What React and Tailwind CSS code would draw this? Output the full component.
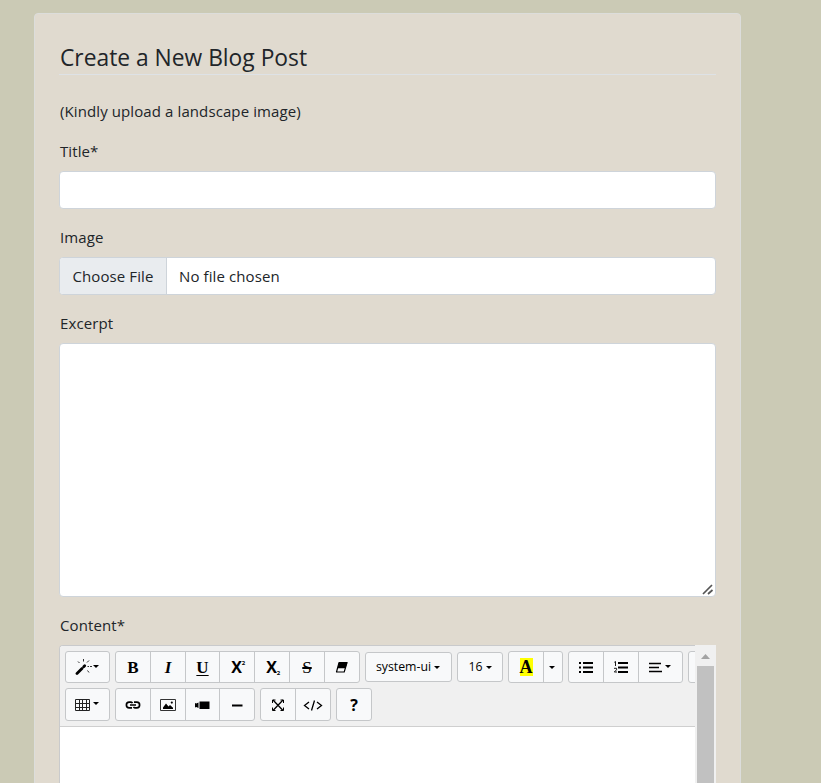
const F = 'font-["Open_Sans","Noto_Sans",sans-serif]';

const Caret = ({ className = '' }) => (
  <svg width="6" height="3" viewBox="0 0 6 3" className={'mb-0.5 shrink-0 ' + className}>
    <path d="M0 0h6L3 3z" fill="#000" />
  </svg>
);

const Ico = ({ w = 16, h = 16, children, className = '' }) => (
  <svg width={w} height={h} viewBox={`0 0 ${w} ${h}`} fill="none" stroke="#000" className={'shrink-0 ' + className}>
    {children}
  </svg>
);

const Wand = () => (
  <Ico w={17}>
    <path d="M2 14.500L7 9.500" strokeWidth="2.800" strokeLinecap="round" />
    <path d="M8.700 7.800L9.700 6.800" strokeWidth="2.800" strokeLinecap="round" />
    <path d="M8.500 0v2.500M14 1.500l-2 2M12.500 7.500h1.500M15 7.500h2" strokeWidth="1" stroke="#333" />
    <path d="M3 2.500l1.500 1.500M12.500 11.500l1.500 2" strokeWidth="1" stroke="#333" />
  </Ico>
);
const TableIcon = () => (
  <Ico>
    <path d="M.5 2.500h14v11H.5zM.5 6.500h14M.5 10.500h14M4.500 2.500v11M7.500 2.500v11M11.500 2.500v11" strokeWidth="1" stroke="#222" />
  </Ico>
);
const LinkIcon = () => (
  <Ico>
    <path d="M7 10.800H4.200a2.800 2.800 0 010-5.600H6a2 2 0 011.500 1M9 5.200h2.800a2.800 2.800 0 010 5.600H10a2 2 0 01-1.500-1M5 8h6" strokeWidth="1.700" />
  </Ico>
);
const Picture = () => (
  <Ico>
    <path d="M.5 2.500h15v11H.5z" strokeWidth="1" stroke="#333" />
    <path d="M3 12V10.500L6 6.500l2.500 3L10 8l3 2.800V12z" fill="#000" stroke="none" />
    <circle cx="11.800" cy="5.600" r="1.100" fill="#000" stroke="none" />
  </Ico>
);
const Video = () => (
  <Ico>
    <path d="M5.500 4.500h10v7.500h-10zM1 6l1.300.5L4.500 5.500v5.500L2.300 10 1 10.500z" fill="#000" stroke="none" />
  </Ico>
);
const Minus = () => (
  <Ico>
    <path d="M3 8.500h10.500" strokeWidth="2" />
  </Ico>
);
const Expand = () => (
  <Ico>
    <path d="M3 3l10 10.500M13 3L3 13.500" strokeWidth="1.300" />
    <path d="M2.500 6V3h3M10.500 3h3v3M13.500 10.500v3h-3M5.500 13.500h-3v-3" strokeWidth="1" />
  </Ico>
);
const Code = () => (
  <Ico w={20}>
    <path d="M6 5L1.500 8.500L6 12M14 5l4.500 3.500L14 12M11.500 3.500L8.500 13.500" strokeWidth="1.300" />
  </Ico>
);
const Eraser = () => (
  <Ico>
    <path d="M5 3.200h8.500l-2 6h-8z" fill="#000" stroke="none" />
    <path d="M5 3.700h8l-2.800 9.300H2.500z" strokeWidth="1.200" strokeLinejoin="round" />
  </Ico>
);
const List = () => (
  <Ico>
    <path d="M5 4h10M5 8.500h10M5 13h10" strokeWidth="1.900" />
    <path d="M1 4h2M1 8.500h2M1 13h2" strokeWidth="1.900" />
  </Ico>
);
const Ordered = () => (
  <Ico>
    <path d="M5 4h10M5 8.500h10M5 13h10" strokeWidth="1.900" />
    <path d="M1.300 3.300l1.200-.8V7M1 9.300h2.500v1.500L1.300 13h2.700" strokeWidth=".9" />
  </Ico>
);
const Align = () => (
  <Ico>
    <path d="M1 4.500h12M1 8.500h10M1 12.500h13" strokeWidth="1.600" />
  </Ico>
);

const Group = ({ children, className = '' }) => (
  <div className={'flex shrink-0 overflow-hidden rounded-[3px] border border-[#c5c7c9] bg-[#f8f9fa] divide-x divide-[#c5c7c9] ' + className}>
    {children}
  </div>
);
const Btn = ({ children, className = 'flex-1' }) => (
  <button type="button" className={'flex min-w-0 items-center justify-center text-black ' + className}>
    {children}
  </button>
);
const Serif = ({ children, className = '' }) => (
  <span className={'mt-px font-["Liberation_Serif",serif] text-[17px] leading-none font-bold ' + className}>{children}</span>
);
const Script = ({ className }) => (
  <span className={'w-[3px] text-[6px] leading-none font-bold ' + className}>2</span>
);
const Label = ({ children, className = '' }) => (
  <div className={'flex h-6 items-center pt-px pl-px text-[15px] tracking-[0.1px] whitespace-nowrap ' + className}>
    <span>{children}</span>
  </div>
);

export default function App() {
  return (
    <div className={'h-[783px] w-[821px] overflow-hidden bg-[#cbcab5] pt-[13px] pl-[34px] text-[#212529] ' + F}>
      <main className="flex h-[900px] w-[707px] flex-col rounded-[4px] border border-[#dcdddb] bg-[#e0dacf] pr-6 pl-6">
        <h1 className="mt-[29px] h-[32px] shrink-0 border-b border-[#dee2e6] pl-px text-[22.800px] leading-[30px] whitespace-nowrap">
          Create a New Blog Post
        </h1>
        <Label className="mt-[24px]">(Kindly upload a landscape image)</Label>
        <Label className="mt-4">Title*</Label>
        <input className="mt-2 h-[38px] shrink-0 rounded-[4px] border border-[#ced4da] bg-white" />
        <Label className="mt-4">Image</Label>
        <div className="mt-2 flex h-[38px] shrink-0 overflow-hidden rounded-[4px] border border-[#ced4da] bg-white text-[15px] tracking-[0.1px]">
          <div className="flex w-[107px] items-center justify-center border-r border-[#ced4da] bg-[#e9ecef] pt-px">
            <span>Choose File</span>
          </div>
          <div className="flex items-center pt-px pl-3">
            <span>No file chosen</span>
          </div>
        </div>
        <Label className="mt-4">Excerpt</Label>
        <div className="mt-2 flex h-[254px] shrink-0 items-end justify-end rounded-[4px] border border-[#ced4da] bg-white p-px">
          <svg width="12" height="12" viewBox="0 0 12 12" fill="none" stroke="#555" strokeWidth="1.700">
            <path d="M1 11L10 2M6 11L10.500 7" />
          </svg>
        </div>
        <Label className="mt-4">Content*</Label>
        <div className="mt-[8px] flex h-[240px] shrink-0">
          <div className="w-[636px] overflow-hidden rounded-tl-[4px] border-t border-l border-[#c9cacc] bg-white">
            <div className="flex h-[81px] flex-col gap-[4px] border-b border-[#cfcfcf] bg-[#f0f0f0] pt-[5px] pl-[5px]">
              <div className="flex h-[33px] gap-[5px]">
                <Group className="h-[32px] w-[45px]"><Btn className="flex-1 pr-0.5"><Wand /><Caret className="ml-px" /></Btn></Group>
                <Group className="h-[32px] w-[245px]">
                  <Btn className="w-[35px]"><Serif>B</Serif></Btn>
                  <Btn className="w-[35px]"><Serif className="italic">I</Serif></Btn>
                  <Btn className="w-[34px]"><Serif className="underline decoration-1 underline-offset-2">U</Serif></Btn>
                  <Btn className="w-[35px] pl-0.5"><span className="text-[16px] leading-none font-bold">X</span><Script className="mb-2" /></Btn>
                  <Btn className="w-[35px] pl-0.5"><span className="text-[16px] leading-none font-bold">X</span><Script className="mt-3" /></Btn>
                  <Btn className="w-[35px]"><Serif className="font-normal line-through decoration-2">S</Serif></Btn>
                  <Btn><Eraser /></Btn>
                </Group>
                <Group className="mt-px h-[30px] w-[87px] text-[12.300px]"><Btn className="flex-1 pr-px"><span>system-ui</span><Caret className="mt-0.5 ml-[3px]" /></Btn></Group>
                <Group className="mt-px h-[30px] w-[46px] text-[12.300px]"><Btn><span>16</span><Caret className="mt-0.5 ml-[3px]" /></Btn></Group>
                <Group className="h-[32px] w-[55px]">
                  <Btn className="w-[35px]"><span className='bg-[#ffff00] font-["Liberation_Serif",serif] text-[18px] leading-[18px] font-bold'>A</span></Btn>
                  <Btn className="flex-1 pr-0.5"><Caret className="mt-0.5" /></Btn>
                </Group>
                <Group className="h-[32px] w-[115px]">
                  <Btn className="w-[35px]"><List /></Btn>
                  <Btn className="w-[35px]"><Ordered /></Btn>
                  <Btn className="flex-1 pr-[3px]"><Align /><Caret className="ml-px" /></Btn>
                </Group>
                <Group className="h-[32px] w-[35px]"><Btn /></Group>
              </div>
              <div className="flex h-[33px] gap-[5px]">
                <Group className="w-[45px]"><Btn className="flex-1 pr-px"><TableIcon /><Caret className="ml-0.5" /></Btn></Group>
                <Group className="w-[140px]">
                  <Btn><LinkIcon /></Btn><Btn><Picture /></Btn><Btn><Video /></Btn><Btn><Minus /></Btn>
                </Group>
                <Group className="w-[71px]"><Btn><Expand /></Btn><Btn><Code /></Btn></Group>
                <Group className="w-[36px]"><Btn><span className="text-[16px] leading-none font-bold">?</span></Btn></Group>
              </div>
            </div>
          </div>
          <div className="flex w-[21px] flex-col items-center bg-[#f0f0f0]">
            <svg width="9" height="5" viewBox="0 0 9 5" className="mt-[9px] mb-[7px]"><path d="M4.500 0L9 5H0z" fill="#a3a3a3" /></svg>
            <div className="w-[17px] flex-1 bg-[#c1c1c1]" />
          </div>
        </div>
      </main>
    </div>
  );
}
